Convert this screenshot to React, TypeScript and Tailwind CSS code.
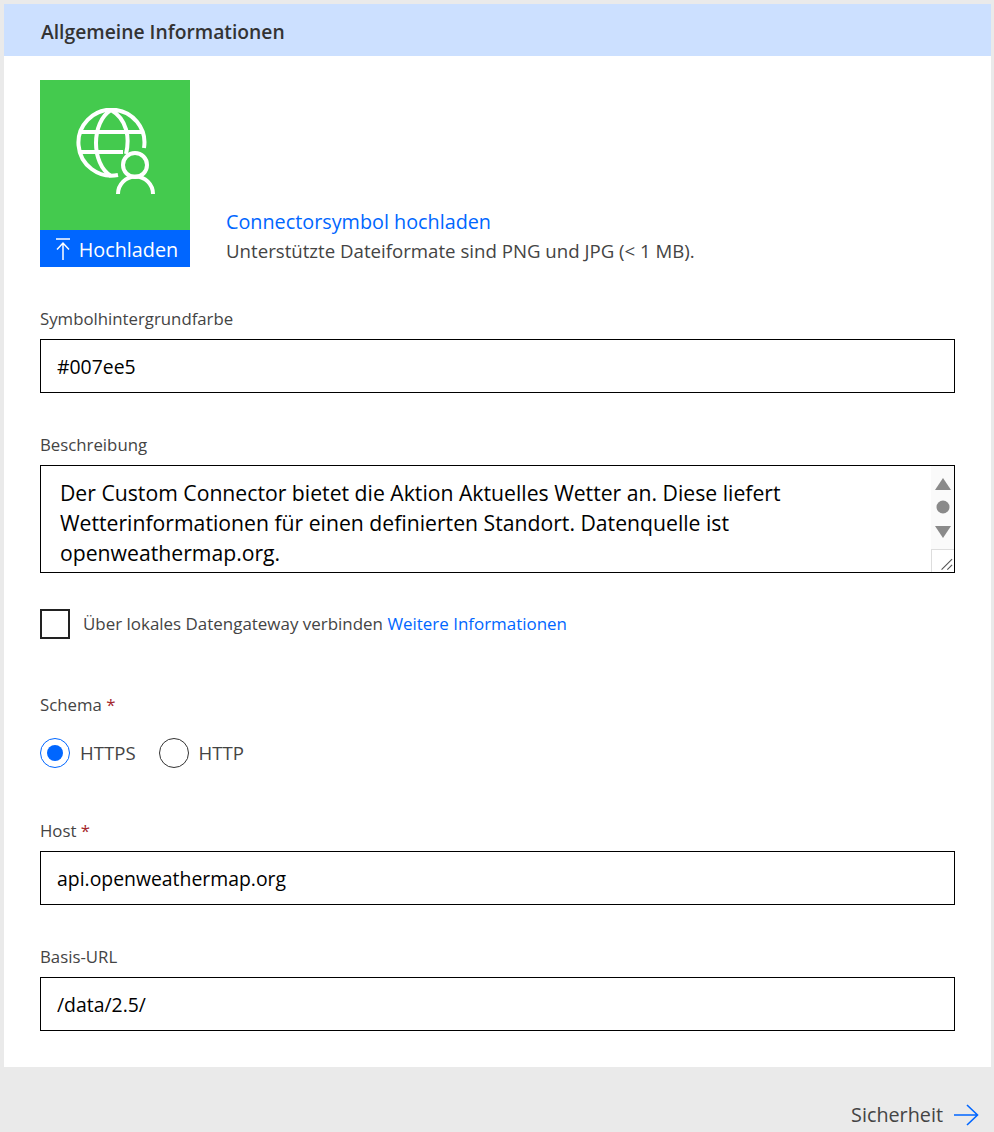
import React from 'react';

function Field({ label, value, required }: { label: string; value: string; required?: boolean }) {
  return (
    <div>
      <div className="h-[31px] text-[16.8px] leading-[22px] text-[#444444]">
        {label}
        {required && <span className="text-[#a4262c]"> *</span>}
      </div>
      <input
        readOnly
        value={value}
        className="block h-[54px] w-[915px] border border-black bg-white px-4 text-[19.4px] text-black outline-none"
      />
    </div>
  );
}

function GlobePersonIcon() {
  return (
    <svg viewBox="0 0 80 88" className="h-[88px] w-[80px]" fill="none" stroke="white" strokeWidth="4">
      <path d="M69 40 A33 33 0 1 0 43 67" />
      <path d="M36 2 C16 14 16 56 36 68 M36 2 C52 11 55 30 51 46" />
      <path d="M5 24 H68 M5 44 H48" />
      <circle cx="60" cy="57" r="12" />
      <path d="M43 86 A17.5 17.5 0 0 1 78 86" />
    </svg>
  );
}

function Radio({ label, checked }: { label: string; checked?: boolean }) {
  return (
    <div className="flex items-center gap-[10px]">
      <div className={`flex h-[30px] w-[30px] items-center justify-center rounded-full border ${checked ? 'border-[#0066ff]' : 'border-[#333333]'}`}>
        {checked && <div className="h-[16px] w-[16px] rounded-full bg-[#0066ff]" />}
      </div>
      <span className="text-[18.6px] text-[#444444]">{label}</span>
    </div>
  );
}

export default function App() {
  return (
    <div className="min-h-[1132px] bg-[#eaeaea] pt-1 pl-1 pr-[3px] font-['Open_Sans',sans-serif]">
      <div className="h-[1063px] bg-white">
        <div className="flex h-[52px] items-center bg-[#cce0ff] pl-[37px] pt-1 text-[19.3px] font-semibold text-[#333333]">
          Allgemeine Informationen
        </div>

        <div className="pl-9 pt-6">
          <div className="flex items-end">
            <div className="w-[150px]">
              <div className="flex h-[150px] items-center justify-center bg-[#44ca4e] pb-[6px]">
                <GlobePersonIcon />
              </div>
              <div className="flex h-[37px] items-center justify-center gap-[9px] bg-[#0066ff] pl-1 text-[19.8px] text-white">
                <svg viewBox="0 0 14 22" className="h-[22px] w-[14px]" fill="none" stroke="white" strokeWidth="1.5">
                  <path d="M0 1 H14 M7 22 V5 M1 11.5 L7 5 L13 11.5" />
                </svg>
                <span className="pt-[3px]">Hochladen</span>
              </div>
            </div>
            <div className="pb-[2px] pl-9">
              <div className="text-[19.8px] leading-[30px] text-[#0066ff]">Connectorsymbol hochladen</div>
              <div className="text-[18.65px] leading-[28px] text-[#444444]">Unterstützte Dateiformate sind PNG und JPG (&lt; 1 MB).</div>
            </div>
          </div>

          <div className="mt-[41px]">
            <Field label="Symbolhintergrundfarbe" value="#007ee5" />
          </div>

          <div className="mt-[41px]">
            <div className="h-[31px] text-[16.8px] leading-[22px] text-[#444444]">Beschreibung</div>
            <div className="relative h-[108px] w-[915px] border border-black pl-[19px] pt-[12px] text-[21.2px] leading-[30px] text-black">
              Der Custom Connector bietet die Aktion Aktuelles Wetter an. Diese liefert
              <br />
              Wetterinformationen für einen definierten Standort. Datenquelle ist
              <br />
              openweathermap.org.
              <div className="absolute right-0 top-0 flex h-full w-[23px] flex-col items-center bg-[#fafafa] pt-[12px]">
                <svg viewBox="0 0 16 60" className="h-[60px] w-[16px]" fill="#8a8a8a">
                  <path d="M8 0 L16 12 H0 Z" />
                  <circle cx="8" cy="29" r="6.5" />
                  <path d="M0 48 H16 L8 60 Z" />
                </svg>
              </div>
              <div className="absolute bottom-0 right-0 h-[23px] w-[23px] border-l border-t border-[#dddddd] bg-white">
                <svg viewBox="0 0 23 23" className="h-[23px] w-[22px]" stroke="#555555" strokeWidth="1.2">
                  <path d="M10 20 L21 9 M16 20 L21 15" />
                </svg>
              </div>
            </div>
          </div>

          <div className="mt-[36px] flex items-center">
            <div className="h-[30px] w-[30px] border-2 border-[#222222]" />
            <span className="ml-[13px] text-[16.95px] text-[#444444]">
              Über lokales Datengateway verbinden <span className="text-[#0066ff]">Weitere Informationen</span>
            </span>
          </div>

          <div className="mt-[54px] h-[45px] text-[16.8px] leading-[24px] text-[#444444]">
            Schema <span className="text-[#a4262c]">*</span>
          </div>
          <div className="flex gap-[23px]">
            <Radio label="HTTPS" checked />
            <Radio label="HTTP" />
          </div>

          <div className="mt-[52px]">
            <Field label="Host" value="api.openweathermap.org" required />
          </div>
          <div className="mt-[41px]">
            <Field label="Basis-URL" value="/data/2.5/" />
          </div>
        </div>
      </div>

      <div className="flex justify-end pr-3 pt-[33px]">
        <div className="flex items-center gap-[10px] text-[19.8px] leading-[30px] text-[#444444]">
          Sicherheit
          <svg viewBox="0 0 26 22" className="h-[22px] w-[26px]" fill="none" stroke="#0066ff" strokeWidth="1.6">
            <path d="M1 11 H24 M14 1 L24.5 11 L14 21" />
          </svg>
        </div>
      </div>
    </div>
  );
}
